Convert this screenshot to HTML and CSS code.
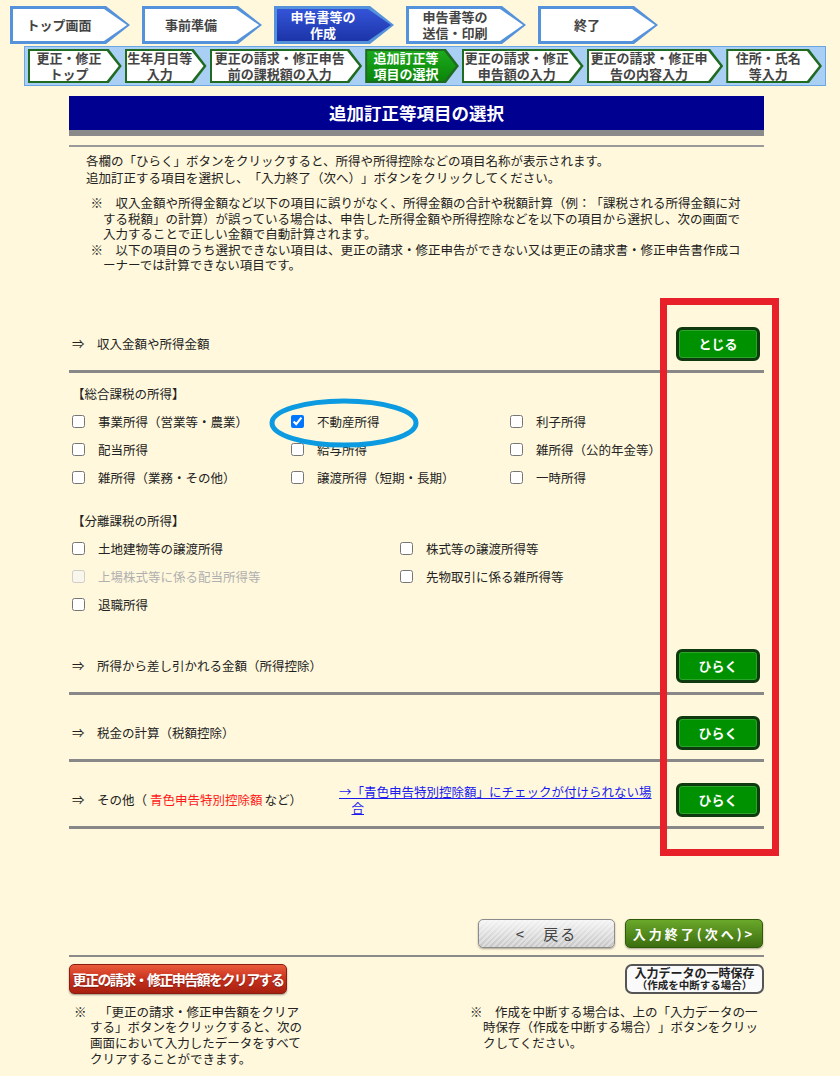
FILE: index.html
```html
<!DOCTYPE html>
<html lang="ja">
<head>
  <meta charset="UTF-8">
  <meta name="viewport" content="width=device-width, initial-scale=1.0">
  <title>追加訂正等項目の選択</title>
  <link rel="stylesheet" href="styles.css">
</head>
<body>
  <div class="steps">
    <div class="step">トップ画面</div>
    <div class="step">事前準備</div>
    <div class="step current">申告書等の<br>作成</div>
    <div class="step">申告書等の<br>送信・印刷</div>
    <div class="step">終了</div>
  </div>

  <div class="substeps">
    <div class="substep s-top">更正・修正<br>トップ</div>
    <div class="substep s-birth">生年月日等<br>入力</div>
    <div class="substep s-before">更正の請求・修正申告<br>前の課税額の入力</div>
    <div class="substep s-select current">追加訂正等<br>項目の選択</div>
    <div class="substep s-amount">更正の請求・修正<br>申告額の入力</div>
    <div class="substep s-detail">更正の請求・修正申<br>告の内容入力</div>
    <div class="substep s-address">住所・氏名<br>等入力</div>
  </div>

  <div class="main">
    <h1 class="title">追加訂正等項目の選択</h1>

    <div class="lead">
      <p>各欄の「ひらく」ボタンをクリックすると、所得や所得控除などの項目名称が表示されます。</p>
      <p>追加訂正する項目を選択し、「入力終了（次へ）」ボタンをクリックしてください。</p>
    </div>

    <ul class="notes">
      <li>※　収入金額や所得金額など以下の項目に誤りがなく、所得金額の合計や税額計算（例：「課税される所得金額に対する税額」の計算）が誤っている場合は、申告した所得金額や所得控除などを以下の項目から選択し、次の画面で入力することで正しい金額で自動計算されます。</li>
      <li>※　以下の項目のうち選択できない項目は、更正の請求・修正申告ができない又は更正の請求書・修正申告書作成コーナーでは計算できない項目です。</li>
    </ul>

    <div class="row">
      <span class="label">⇒　収入金額や所得金額</span>
      <button class="toggle">とじる</button>
    </div>
    <div class="detail">
      <p class="group">【総合課税の所得】</p>
      <div class="checks">
        <label><input type="checkbox">事業所得（営業等・農業）</label>
        <label><input type="checkbox" checked>不動産所得</label>
        <label><input type="checkbox">利子所得</label>
        <label><input type="checkbox">配当所得</label>
        <label><input type="checkbox">給与所得</label>
        <label><input type="checkbox">雑所得（公的年金等）</label>
        <label><input type="checkbox">雑所得（業務・その他）</label>
        <label><input type="checkbox">譲渡所得（短期・長期）</label>
        <label><input type="checkbox">一時所得</label>
      </div>
      <p class="group second">【分離課税の所得】</p>
      <div class="checks two">
        <label><input type="checkbox">土地建物等の譲渡所得</label>
        <label><input type="checkbox">株式等の譲渡所得等</label>
        <label class="disabled"><input type="checkbox" disabled>上場株式等に係る配当所得等</label>
        <label><input type="checkbox">先物取引に係る雑所得等</label>
        <label><input type="checkbox">退職所得</label>
      </div>
    </div>

    <div class="row">
      <span class="label">⇒　所得から差し引かれる金額（所得控除）</span>
      <button class="toggle">ひらく</button>
    </div>

    <div class="row">
      <span class="label">⇒　税金の計算（税額控除）</span>
      <button class="toggle">ひらく</button>
    </div>

    <div class="row">
      <span class="label wide">⇒　その他（<span class="red">青色申告特別控除額</span>など）</span>
      <div class="link"><a href="#">→「青色申告特別控除額」にチェックが付けられない場合</a></div>
      <button class="toggle">ひらく</button>
    </div>

    <div class="nav">
      <button class="back">&lt;　戻る</button>
      <button class="next">入力終了(次へ)&gt;</button>
    </div>

    <div class="actions">
      <button class="clear">更正の請求・修正申告額をクリアする</button>
      <button class="save">入力データの一時保存<small>（作成を中断する場合）</small></button>
    </div>

    <div class="footnotes">
      <p class="note-left">※　「更正の請求・修正申告額をクリアする」ボタンをクリックすると、次の画面において入力したデータをすべてクリアすることができます。</p>
      <p class="note-right">※　作成を中断する場合は、上の「入力データの一時保存（作成を中断する場合）」ボタンをクリックしてください。</p>
    </div>
  </div>

  <!-- hand-drawn highlights over the form -->
  <div class="mark-box"></div>
  <svg class="mark-ring" width="152" height="54" viewBox="0 0 152 54">
    <ellipse cx="76" cy="27" rx="72" ry="22" fill="none" stroke="#0c9be0" stroke-width="5"/>
  </svg>
</body>
</html>
```

FILE: styles.css
```css
body {
  margin: 0;
  position: relative;
  background-color: #fff8dc;
  color: #222;
  font-family: "Noto Sans CJK JP", sans-serif;
  font-size: 12.5px;
  text-spacing-trim: space-all;
}

p {
  margin: 0;
}

button {
  font-family: "Noto Sans CJK JP", sans-serif;
  cursor: pointer;
  padding: 0;
}

/* top progress arrows */
.steps {
  display: flex;
  gap: 12px;
  padding: 6px 0 0 10px;
}

.step {
  position: relative;
  width: 120px;
  height: 38px;
  padding-right: 22px;
  box-sizing: border-box;
  display: flex;
  align-items: center;
  justify-content: center;
  text-align: center;
  font-size: 13px;
  font-weight: bold;
  line-height: 16px;
  color: #444;
  background: #5592dc;
  clip-path: polygon(0 0, 96px 0, 100% 50%, 96px 100%, 0 100%);
}

.step::before {
  content: "";
  position: absolute;
  inset: 3px;
  z-index: -1;
  background: #fff;
  clip-path: polygon(0 0, calc(100% - 23px) 0, 100% 50%, calc(100% - 23px) 100%, 0 100%);
}

.step.current {
  color: #fff;
}

.step.current::before {
  background: linear-gradient(#3454d8, #1c34a8);
}

/* second level arrows */
.substeps {
  display: flex;
  gap: 3px;
  margin: 2px 14px 0 24px;
  padding: 2px 3px;
  background: #a9cff4;
  border: 1px solid #6ca5e3;
}

.substep {
  position: relative;
  height: 34px;
  padding-right: 12px;
  box-sizing: border-box;
  display: flex;
  align-items: center;
  justify-content: center;
  text-align: center;
  font-size: 13px;
  font-weight: bold;
  line-height: 16px;
  color: #444;
  background: #1f6b22;
  clip-path: polygon(0 0, calc(100% - 13px) 0, 100% 50%, calc(100% - 13px) 100%, 0 100%);
}

.substep::before {
  content: "";
  position: absolute;
  inset: 2px 3px 2px 2px;
  z-index: -1;
  background: #fff;
  clip-path: polygon(0 0, calc(100% - 12px) 0, 100% 50%, calc(100% - 12px) 100%, 0 100%);
}

.substep.current {
  color: #fff;
}

.substep.current::before {
  background: linear-gradient(#1caa1c, #0a850a);
}

.s-top { width: 94px; }
.s-birth { width: 82px; }
.s-before { width: 153px; }
.s-select { width: 94px; }
.s-amount { width: 122px; }
.s-detail { width: 137px; }
.s-address { width: 96px; }

/* page body */
.main {
  width: 695px;
  margin: 10px 0 0 69px;
}

.title {
  margin: 0;
  height: 34px;
  line-height: 34px;
  background: #000090;
  border-bottom: 6px solid #8a8a8a;
  color: #fff;
  font-size: 17.5px;
  text-align: center;
}

.lead {
  margin-top: 9px;
  border-top: 2px solid #9a9a9a;
  padding: 5px 0 0 17px;
  line-height: 17px;
}

.notes {
  list-style: none;
  margin: 9px 0 0;
  padding: 0 16px 0 34px;
  line-height: 15.5px;
}

.notes li {
  text-indent: -1em;
}

.row {
  display: flex;
  align-items: center;
  padding: 21px 4px 9px 3px;
  border-bottom: 3px solid #888;
}

.notes + .row {
  margin-top: 33px;
}

.label.wide {
  width: 267px;
  flex: none;
}

.red {
  color: #ff1a1a;
  margin: 0 2px 0 3px;
}

.link {
  width: 318px;
  box-sizing: border-box;
  padding-left: 1em;
  text-indent: -1em;
  line-height: 16px;
}

.link a {
  color: #1a1aee;
}

.toggle {
  margin-left: auto;
  width: 84px;
  height: 34px;
  border: 3px solid #0f3a0f;
  border-radius: 6px;
  background: #009100;
  box-shadow: inset 0 0 0 1px #2aa52a;
  color: #fff;
  font-size: 13px;
  font-weight: bold;
}

/* checkbox lists */
.detail {
  padding: 12px 0 9px 3px;
}

.group {
  line-height: 18px;
}

.group.second {
  margin-top: 20px;
}

.checks {
  display: grid;
  grid-template-columns: repeat(3, 219px);
  grid-auto-rows: 28px;
  margin-top: 5px;
}

.checks.two {
  grid-template-columns: repeat(2, 328px);
}

.checks label {
  display: flex;
  align-items: center;
  gap: 13px;
}

.checks input {
  margin: 0;
  width: 13px;
  height: 13px;
}

.checks label.disabled {
  color: #b0b0b0;
}

/* bottom buttons */
.nav {
  display: flex;
  justify-content: flex-end;
  gap: 10px;
  margin-top: 90px;
  padding-right: 1px;
}

.back {
  width: 137px;
  height: 29px;
  border: 1px solid #8c8c8c;
  border-radius: 5px;
  background:
    repeating-linear-gradient(135deg, rgba(255, 255, 255, 0.35) 0 2px, transparent 2px 4px),
    linear-gradient(#f4f4f4, #c6c6c6);
  box-shadow: 0 1px 2px rgba(0, 0, 0, 0.35);
  color: #444;
  font-size: 15px;
  letter-spacing: 2px;
}

.next {
  width: 138px;
  height: 29px;
  border: 1px solid #2f5a0a;
  border-radius: 5px;
  background: linear-gradient(#6aa82a, #3c6e10);
  box-shadow: 0 1px 2px rgba(0, 0, 0, 0.35);
  color: #fff;
  font-size: 13px;
  font-weight: bold;
  letter-spacing: 3px;
}

.actions {
  display: flex;
  justify-content: space-between;
  margin-top: 7px;
  padding-top: 7px;
  border-top: 2px solid #8a8a8a;
}

.clear {
  width: 218px;
  height: 30px;
  border: 1px solid #8a1c10;
  border-radius: 5px;
  background: linear-gradient(#ea5a3a, #c42e1c 55%, #a8200f);
  box-shadow: 0 1px 2px rgba(0, 0, 0, 0.4);
  color: #fff;
  font-size: 14px;
  font-weight: bold;
  letter-spacing: -1.6px;
  text-shadow: 0 1px 1px rgba(0, 0, 0, 0.3);
}

.save {
  width: 139px;
  height: 30px;
  border: 2px solid #555;
  border-radius: 7px;
  background: #fafafa;
  color: #222;
  font-size: 12px;
  font-weight: bold;
  line-height: 13px;
}

.save small {
  display: block;
  font-size: 10.5px;
  line-height: 12px;
}

.footnotes {
  display: flex;
  justify-content: space-between;
  margin-top: 10px;
  line-height: 15.7px;
}

.note-left {
  width: 232px;
  margin-left: 5px;
  padding-left: 16px;
  text-indent: -16px;
  box-sizing: border-box;
}

.note-right {
  width: 294px;
  padding-left: 13px;
  text-indent: -13px;
  box-sizing: border-box;
}

/* highlight marks */
.mark-box {
  position: absolute;
  left: 660px;
  top: 298px;
  width: 119px;
  height: 558px;
  box-sizing: border-box;
  border: 7px solid #e8202a;
}

.mark-ring {
  position: absolute;
  left: 268px;
  top: 396px;
}
```
